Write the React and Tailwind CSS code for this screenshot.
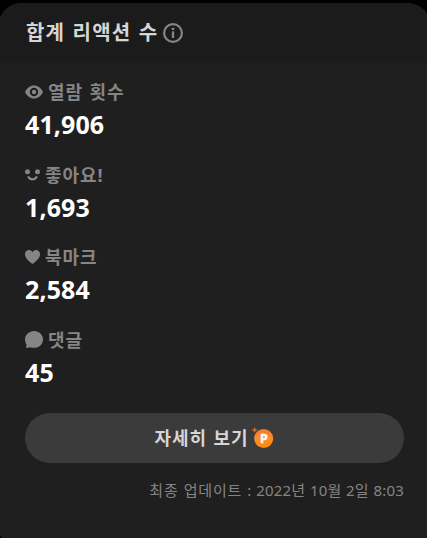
const FONT = "font-['Noto_Sans','Noto_Sans_CJK_KR',sans-serif]";

function InfoIcon() {
  return (
    <svg width="20" height="20" viewBox="0 0 20 20" fill="none">
      <circle cx="10" cy="10" r="8.900" stroke="#858585" strokeWidth="2.200" />
      <rect x="8.800" y="4.700" width="2.400" height="2.400" rx=".6" fill="#858585" />
      <rect x="8.800" y="8.300" width="2.400" height="6.700" rx=".4" fill="#858585" />
    </svg>
  );
}

function EyeIcon() {
  return (
    <svg width="18" height="14" viewBox="0 0 18 14" fill="#858585">
      <path
        fillRule="evenodd"
        d="M0 7C2 3 5 .5 9 .5S16 3 18 7c-2 4-5 6.500-9 6.500S2 11 0 7zM9 11.200a4.200 4.200 0 1 0 0-8.400 4.200 4.200 0 0 0 0 8.400z"
      />
      <circle cx="9" cy="7" r="2.200" />
    </svg>
  );
}

function SmileIcon() {
  return (
    <svg width="15" height="12" viewBox="0 0 15 12" fill="none">
      <circle cx="2.500" cy="2.700" r="2.500" fill="#858585" />
      <circle cx="12.500" cy="2.700" r="2.500" fill="#858585" />
      <path d="M3.500 8.200c1.800 3 6.200 3 8 0" stroke="#858585" strokeWidth="2.300" strokeLinecap="round" />
    </svg>
  );
}

function HeartIcon() {
  return (
    <svg width="15" height="14" viewBox="0 0 15 14" fill="#858585">
      <path d="M7.500 2.200C6.700.8 5.400 0 4 0 1.700 0 0 1.800 0 4.200 0 7.500 2.800 10.300 7.500 14 12.200 10.300 15 7.500 15 4.200 15 1.800 13.300 0 11 0 9.600 0 8.300.8 7.500 2.200z" />
    </svg>
  );
}

function CommentIcon() {
  return (
    <svg width="18" height="17" viewBox="0 0 18 17" fill="#858585">
      <path d="M9.200 0C14.100 0 18 3.700 18 8.400s-3.900 8.400-8.800 8.400c-1.600 0-3-.2-4.200-.6-1.200.5-2.500.7-4 .7.400-1.300.6-2.500.4-3.700C.5 11.900 0 10.200 0 8.400 0 3.700 4.300 0 9.200 0z" />
    </svg>
  );
}

function PremiumIcon() {
  return (
    <svg width="22" height="22" viewBox="0 0 22 22">
      <defs>
        <linearGradient id="coin" x1="0" y1="0" x2="0" y2="1">
          <stop offset="0" stopColor="#f4792b" />
          <stop offset="0.5" stopColor="#ff8c2a" />
          <stop offset="1" stopColor="#ff8a00" />
        </linearGradient>
      </defs>
      <circle cx="11.700" cy="11.500" r="9.500" fill="url(#coin)" />
      <path d="M2.700 0l.9 2.100 2.100.9-2.100.9-.9 2.100-.9-2.100L-.3 3l2.100-.9z" fill="#d9691e" />
      <text
        x="12"
        y="15.800"
        textAnchor="middle"
        fontSize="12.500"
        fontWeight="700"
        fill="#fff"
        stroke="#fff"
        strokeWidth="0.400"
      >
        P
      </text>
    </svg>
  );
}

const stats = [
  { label: "열람 횟수", value: "41,906", icon: <EyeIcon /> },
  { label: "좋아요!", value: "1,693", icon: <SmileIcon /> },
  { label: "북마크", value: "2,584", icon: <HeartIcon /> },
  { label: "댓글", value: "45", icon: <CommentIcon /> },
];

export default function App() {
  return (
    <div className={`h-[538px] overflow-hidden bg-black pt-[3px] ${FONT}`}>
      <div className="-ml-0.5 h-[546px] w-[433px] overflow-hidden rounded-3xl bg-[#1f1f1f]">
        <header className="flex h-[60px] items-center gap-[5px] bg-[#1b1b1b] pl-7">
          <h1 className="text-[20px] leading-none font-bold tracking-[1.200px] text-[#d6d6d6] [word-spacing:1px]">
            합계 리액션 수
          </h1>
          <InfoIcon />
        </header>

        <main className="pt-4 pr-[27px] pl-[27px]">
          {stats.map((stat) => (
            <section key={stat.label} className="h-[82.500px]">
              <div className="flex h-[26px] items-center gap-[5px]">
                {stat.icon}
                <span className="text-[18px] leading-none font-bold tracking-[0.900px] text-[#858585] [word-spacing:1px]">
                  {stat.label}
                </span>
              </div>
              <p className="flex h-[39px] items-center text-[25px] leading-none font-bold tracking-[0.100px] text-white">
                {stat.value}
              </p>
            </section>
          ))}

          <button className="mt-1 flex h-[50px] w-full items-center justify-center gap-1 rounded-full bg-[#3b3b3b]">
            <span className="text-[18px] leading-none font-bold tracking-[0.900px] text-[#d6d6d6] [word-spacing:1px]">
              자세히 보기
            </span>
            <PremiumIcon />
          </button>

          <p className="mt-[17px] text-right text-[15px] leading-5 text-[#858585]">
            <span className="tracking-[0.800px] [word-spacing:0.500px]">최종 업데이트 </span>
            <span className="tracking-[0.200px] [word-spacing:0.500px]">: 2022년 10월 2일 8:03</span>
          </p>
        </main>
      </div>
    </div>
  );
}
